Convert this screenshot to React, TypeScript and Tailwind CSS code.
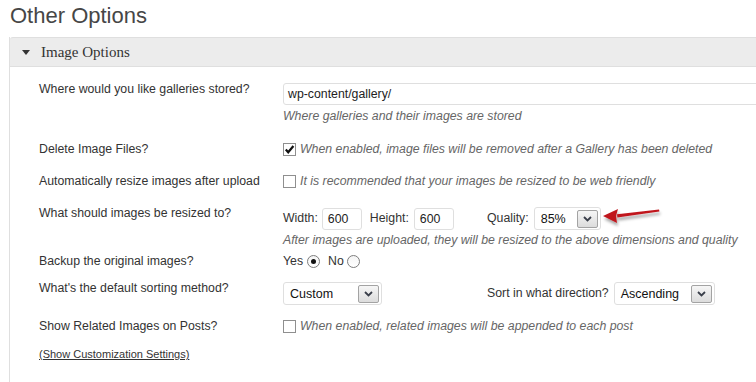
import React from 'react';

const label = "w-[273px] shrink-0 pl-[29px] text-[12.3px] leading-[16px] text-[#333]";
const hint = "text-[12.3px] leading-[16px] italic text-[#666]";

function Chevron() {
  return (
    <span className="flex h-[18px] w-[21px] items-center justify-center rounded-[2px] border border-[#a3a3a3] bg-gradient-to-b from-[#f6f6f6] to-[#dcdcdc]">
      <svg width="9" height="6" viewBox="0 0 9 6">
        <path d="M1 1 L4.5 4.5 L8 1" fill="none" stroke="#3a3f4a" strokeWidth="1.8" />
      </svg>
    </span>
  );
}

function Select({ value, width }: { value: string; width: string }) {
  return (
    <div className={`flex h-[23px] items-center justify-between rounded-[3px] border border-[#dfdfdf] bg-white pl-[6px] pr-[2px] text-[12.5px] text-[#111] ${width}`}>
      <span className="pt-[1px]">{value}</span>
      <Chevron />
    </div>
  );
}

function Checkbox({ checked }: { checked?: boolean }) {
  return (
    <span className="flex h-[13px] w-[13px] shrink-0 items-center justify-center border border-[#8f8f8f] bg-white">
      {checked && (
        <svg width="11" height="11" viewBox="0 0 11 11">
          <path d="M1.8 5.6 L4.2 8.3 L9.4 2" fill="none" stroke="#111" strokeWidth="2.2" />
        </svg>
      )}
    </span>
  );
}

function Radio({ checked }: { checked?: boolean }) {
  return (
    <span className="flex h-[13px] w-[13px] shrink-0 items-center justify-center rounded-full border border-[#7d7d7d] bg-gradient-to-b from-[#f4f4f4] to-white">
      {checked && <span className="h-[5px] w-[5px] rounded-full bg-[#111]" />}
    </span>
  );
}

function NumberBox({ value }: { value: string }) {
  return (
    <div className="flex h-[22px] w-[40px] items-center rounded-[3px] border border-[#dfdfdf] bg-white pl-[5px] pt-[2px] text-[12.3px] text-[#222]">
      {value}
    </div>
  );
}

export default function App() {
  return (
    <div className="relative h-[382px] w-[756px] overflow-hidden bg-white font-['Liberation_Sans',Arial,sans-serif]">
      <h2 className="pl-[10px] pt-[3px] text-[22px] leading-[26px] text-[#464646]">Other Options</h2>

      <div className="ml-[9px] mt-[8px] h-[400px] w-[800px] border-l border-[#dfdfdf]">
        <div className="flex h-[30px] items-center rounded-tl-[3px] border-t border-b border-[#dfdfdf] bg-[#ececec] pl-[12px]">
          <svg width="8" height="5" viewBox="0 0 8 5">
            <path d="M0 0 H8 L4 5 Z" fill="#333" />
          </svg>
          <span className="ml-[11px] font-['Liberation_Serif',Georgia,serif] text-[15px] text-[#333]">Image Options</span>
        </div>

        <div className="mt-[14px] flex">
          <div className={label}>Where would you like galleries stored?</div>
          <div>
            <div className="mt-[2px] flex h-[22px] w-[520px] items-center rounded-[3px] border border-[#dfdfdf] bg-white pl-[4px] pt-[1px] text-[12.3px] text-[#222]">
              wp-content/gallery/
            </div>
            <div className={`mt-[3px] ${hint}`}>Where galleries and their images are stored</div>
          </div>
        </div>

        <div className="mt-[17px] flex">
          <div className={label}>Delete Image Files?</div>
          <div className="flex h-[16px] items-center">
            <Checkbox checked />
            <span className={`ml-[4px] ${hint}`}>When enabled, image files will be removed after a Gallery has been deleted</span>
          </div>
        </div>

        <div className="mt-[16px] flex">
          <div className={label}>Automatically resize images after upload</div>
          <div className="flex h-[16px] items-center">
            <Checkbox />
            <span className={`ml-[4px] ${hint}`}>It is recommended that your images be resized to be web friendly</span>
          </div>
        </div>

        <div className="mt-[16px] flex">
          <div className={label}>What should images be resized to?</div>
          <div>
            <div className="mt-[2px] flex h-[23px] items-center text-[12.3px] text-[#333]">
              <div className="flex w-[204px] items-center">
                <span>Width:</span>
                <div className="ml-[4px]"><NumberBox value="600" /></div>
                <span className="ml-[8px]">Height:</span>
                <div className="ml-[5px]"><NumberBox value="600" /></div>
              </div>
              <span>Quality:</span>
              <div className="ml-[5px]"><Select value="85%" width="w-[67px]" /></div>
            </div>
            <div className={`mt-[2px] ${hint}`}>After images are uploaded, they will be resized to the above dimensions and quality</div>
          </div>
        </div>

        <div className="mt-[5px] flex">
          <div className={label}>Backup the original images?</div>
          <div className="flex h-[16px] items-center text-[12.3px] text-[#333]">
            <span>Yes</span>
            <span className="ml-[4px]"><Radio checked /></span>
            <span className="ml-[8px]">No</span>
            <span className="ml-[3px]"><Radio /></span>
          </div>
        </div>

        <div className="mt-[11px] flex">
          <div className={label}>What's the default sorting method?</div>
          <div className="mt-[2px] flex items-center text-[12.3px] text-[#333]">
            <div className="w-[204px]"><Select value="Custom" width="w-[99px]" /></div>
            <span>Sort in what direction?</span>
            <div className="ml-[5px]"><Select value="Ascending" width="w-[101px]" /></div>
          </div>
        </div>

        <div className="mt-[13px] flex">
          <div className={label}>Show Related Images on Posts?</div>
          <div className="flex h-[16px] items-center">
            <Checkbox />
            <span className={`ml-[4px] ${hint}`}>When enabled, related images will be appended to each post</span>
          </div>
        </div>

        <div className="mt-[12px] pl-[29px] text-[11px] leading-[16px] text-[#333] underline">(Show Customization Settings)</div>
      </div>

      <svg className="absolute left-[598px] top-[202px]" width="70" height="30" viewBox="0 0 70 30">
        <defs>
          <filter id="sh" x="-20%" y="-50%" width="140%" height="220%">
            <feDropShadow dx="1" dy="3" stdDeviation="1.6" floodColor="#000" floodOpacity="0.35" />
          </filter>
        </defs>
        <g filter="url(#sh)">
          <path d="M19 12.2 L61 7.6 L61.4 9.6 L19.4 15.4 Z" fill="#c0181f" />
          <path d="M5 14 L20 7 L18 14 L19 21 Z" fill="#c0181f" />
        </g>
      </svg>
    </div>
  );
}
